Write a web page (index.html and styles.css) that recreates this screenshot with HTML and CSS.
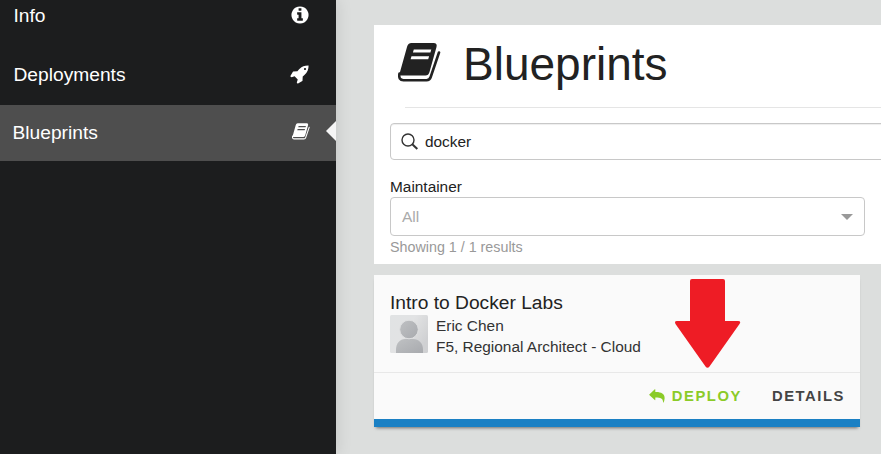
FILE: index.html
```html
<!DOCTYPE html>
<html lang="en">
<head>
<meta charset="utf-8">
<title>Blueprints</title>
<link rel="stylesheet" href="styles.css">
</head>
<body>
<svg class="defs" aria-hidden="true">
  <symbol id="book" viewBox="0 0 43 39">
    <path fill-rule="evenodd" d="M13.500 0H35.500q4 0 3 4L31.500 29q-1 3.500-4 3.500H3Q1 32.500 2 29L9 4Q10 0 13.500 0zM15.800 6.500L14.900 9.500H32.400L33.300 6.500zM13.500 13.300L12.600 16.300H30.200L31.100 13.300z"/>
    <path class="pages" d="M1.500 30.500q-1.300 6.700 4 6.700H28.500q3.200 0 4.200-3.200L41 9.500"/>
  </symbol>
</svg>
<div class="app">
  <nav class="sidebar">
    <a class="item"><span>Info</span>
      <svg class="icon info" viewBox="0 0 1792 1792"><path d="M1152 1376v-160q0-14-9-23t-23-9h-96v-512q0-14-9-23t-23-9h-320q-14 0-23 9t-9 23v160q0 14 9 23t23 9h96v320h-96q-14 0-23 9t-9 23v160q0 14 9 23t23 9h448q14 0 23-9t9-23zm-128-896v-160q0-14-9-23t-23-9h-192q-14 0-23 9t-9 23v160q0 14 9 23t23 9h192q14 0 23-9t9-23zm640 416q0 209-103 385.500t-279.500 279.500-385.500 103-385.500-103-279.500-279.500-103-385.500 103-385.500 279.500-279.500 385.500-103 385.500 103 279.500 279.500 103 385.500z"/></svg></a>
    <a class="item"><span>Deployments</span>
      <svg class="icon" viewBox="0 0 1792 1792"><path d="M1440 448q0-40-28-68t-68-28-68 28-28 68 28 68 68 28 68-28 28-68zm224-288q0 249-75.500 430.500t-253.500 360.500q-81 80-195 176l-20 379q-2 16-16 26l-384 224q-7 4-16 4-12 0-23-9l-64-64q-13-14-8-32l85-276-281-281-276 85q-3 1-9 1-14 0-23-9l-64-64q-17-19-5-39l224-384q10-14 26-16l379-20q96-114 176-195 188-187 358-258t431-71q14 0 24 9.500t10 22.500z"/></svg></a>
    <a class="item active"><span>Blueprints</span>
      <svg class="icon book"><use href="#book"/></svg></a>
  </nav>
  <main class="main">
    <section class="panel">
      <header class="heading">
        <svg class="heading-icon"><use href="#book"/></svg>
        <h1>Blueprints</h1>
      </header>
      <div class="rule"></div>
      <div class="search">
        <svg class="search-icon" viewBox="0 0 18 18"><circle cx="7" cy="7" r="6"/><path class="handle" d="M11.300 11.300l5 4.700"/></svg>
        <span>docker</span>
      </div>
      <div class="label">Maintainer</div>
      <div class="select"><span>All</span><i class="caret"></i></div>
      <div class="count">Showing 1 / 1 results</div>
    </section>
    <article class="card">
      <div class="card-body">
        <h2>Intro to Docker Labs</h2>
        <div class="author">
          <svg class="avatar" viewBox="0 0 38 38">
            <defs>
              <linearGradient id="bg" x1="0" y1="0" x2="1" y2="0.600"><stop offset="0" stop-color="#e1e3e4"/><stop offset="0.500" stop-color="#e2e3e4"/><stop offset="1" stop-color="#cfd0d2"/></linearGradient>
              <linearGradient id="fg" x1="0" y1="0" x2="1" y2="1"><stop offset="0" stop-color="#bfc1c3"/><stop offset="1" stop-color="#a8aaae"/></linearGradient>
            </defs>
            <rect width="38" height="38" rx="1.500" fill="url(#bg)"/>
            <path d="M6 38v-3c0-7 4-11 9-11h8c6 0 10 4 10 11v3z" fill="url(#fg)"/>
            <circle cx="19" cy="14.500" r="9.300" fill="url(#fg)" stroke="#dfe0e1"/>
          </svg>
          <div class="author-text"><div>Eric Chen</div><div>F5, Regional Architect - Cloud</div></div>
        </div>
      </div>
      <footer class="actions">
        <a class="deploy"><svg viewBox="0 0 16 14"><path d="M.3 5.400L5.800.3q.5-.4.5.3V3C12 2.700 16 5 15.600 9.500Q15.400 12 14.500 13.500q-.6.400-.5-.500C14.200 9.500 11.500 8.300 6.300 8.400V10.800q0 .8-.5.300L.3 6q-.3-.3 0-.6z"/></svg>DEPLOY</a>
        <a class="details">DETAILS</a>
      </footer>
      <svg class="arrow" viewBox="0 0 66 90"><path d="M17 0h31q2 0 2 2v40h13q3.500 0 1.500 3L34.500 87.500q-2 2.500-4 0L.5 45q-1.500-3 1.500-3h13V2q0-2 2-2z"/></svg>
    </article>
  </main>
</div>
</body>
</html>
```
FILE: styles.css
```css
* { box-sizing: border-box; }
body {
  margin: 0;
  height: 454px;
  overflow: hidden;
  background: #dcdedd;
  color: #222;
  font-family: "Liberation Sans", Arial, sans-serif;
}
h1, h2 { margin: 0; font-weight: 400; }
svg { display: block; fill: currentColor; flex: none; }
.defs { position: absolute; width: 0; height: 0; }
.pages { fill: none; stroke: currentColor; stroke-width: 2.6; stroke-linecap: round; }
.app { display: flex; height: 454px; }

.sidebar {
  flex: none;
  width: 336px;
  background: #1c1d1e;
  box-shadow: 0 0 16px rgba(0, 0, 0, .12);
  display: flex;
  flex-direction: column;
  gap: 3px;
  color: #fff;
  font-size: 19.2px;
}
.item {
  position: relative;
  flex: none;
  height: 56px;
  padding: 0 26px 0 13.500px;
  display: flex;
  align-items: center;
  justify-content: space-between;
}
.item:first-child { margin-top: -13px; }
.item span { padding-top: 1px; }
.item.active { background: #4e4e4e; padding-left: 12.500px; }
.item.active span { padding: 0 0 1px; }
.item.active::after {
  content: "";
  position: absolute;
  right: 0;
  top: 16px;
  border: 10px solid transparent;
  border-left-width: 0;
  border-right-color: #f5f5f5;
}
.icon { width: 20px; height: 20px; }
.icon.book { width: 18px; height: 17px; margin-bottom: 3px; }
.info { margin-bottom: 1px; }

.main { flex: none; width: 560px; padding: 25px 0 0 38px; }
.panel { height: 239px; padding-left: 16px; background: #fff; }
.heading { display: flex; height: 82px; padding: 13px 0 0 8px; }
.heading-icon { width: 43px; height: 39px; margin-top: 5px; }
.heading h1 { margin-left: 22px; font-size: 46px; line-height: 52px; }
.rule { height: 1px; margin-left: 15px; background: #e5e5e5; }
.search {
  height: 37px;
  margin-top: 15px;
  padding-left: 10px;
  display: flex;
  align-items: center;
  gap: 6px;
  border: 1px solid #c8c8c8;
  border-radius: 4px;
  box-shadow: inset 0 1px 1px #eee;
  font-size: 15.400px;
}
.search-icon { width: 18px; height: 18px; fill: none; stroke: #333; stroke-width: 1.4; }
.handle { stroke-width: 2; }
.label { margin-top: 17px; height: 20px; line-height: 19px; font-size: 15.400px; }
.select {
  width: 475px;
  height: 39px;
  padding: 0 11px;
  display: flex;
  align-items: center;
  justify-content: space-between;
  border: 1px solid #c8c8c8;
  border-radius: 4px;
  color: #aaa;
  font-size: 15.500px;
}
.caret { border: 6px solid transparent; border-top-color: #999; border-bottom: 0; }
.count { margin-top: 2px; color: #999; font-size: 14.300px; line-height: 18px; }

.card {
  position: relative;
  width: 486px;
  height: 152px;
  margin-top: 11px;
  background: #fafafa;
  border-bottom: 8px solid #1a80c4;
  box-shadow: 0 3px 3px -2px rgba(0, 0, 0, .5);
}
.card-body { height: 97px; padding: 16px 16px 0; }
.card h2 { font-size: 19.200px; line-height: 24px; }
.author { display: flex; gap: 8px; font-size: 15.430px; line-height: 21px; }
.avatar { width: 38px; height: 38px; }
.author-text { color: #333; }
.actions {
  height: 47px;
  padding-right: 15px;
  display: flex;
  align-items: center;
  justify-content: flex-end;
  gap: 30px;
  border-top: 1px solid #e8e8e8;
  color: #444;
  font-size: 14.800px;
  font-weight: 700;
  letter-spacing: 1.550px;
}
.deploy { display: flex; align-items: center; gap: 7px; color: #8bcb28; }
.deploy svg { width: 16px; height: 14px; }
.arrow { position: absolute; left: 301px; top: 4px; width: 66px; height: 90px; fill: #ee1c25; }
```
